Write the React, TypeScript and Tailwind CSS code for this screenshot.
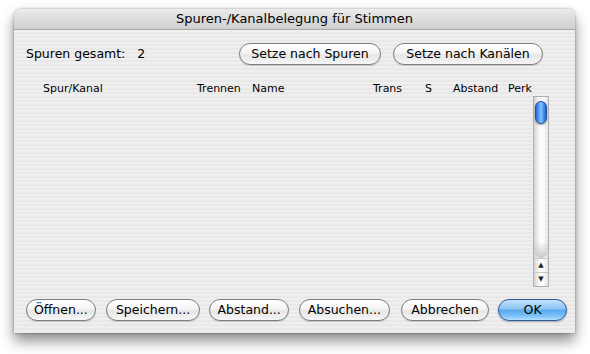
import React from "react";

const font = { fontFamily: '"DejaVu Sans", "Liberation Sans", sans-serif' };

function AquaButton({ label, className = "" }: { label: string; className?: string }) {
  return (
    <div
      className={
        "h-[22px] rounded-full border border-[#7d7d7d] flex items-center justify-center text-[12.5px] text-black bg-[linear-gradient(to_bottom,#ffffff_0%,#f4f4f4_45%,#e6e6e6_55%,#f6f6f6_100%)] shadow-[0_1px_1px_rgba(0,0,0,0.15)] " +
        className
      }
    >
      {label}
    </div>
  );
}

export default function App() {
  return (
    <div className="w-[590px] h-[354px] bg-white pt-[9px] pl-[14px]" style={font}>
      <div className="w-[561px] h-[324px] rounded-t-[7px] flex flex-col shadow-[0_8px_14px_rgba(0,0,0,0.45),0_0_3px_rgba(0,0,0,0.35)] overflow-hidden">
        {/* Title bar */}
        <div className="h-[21px] shrink-0 flex items-center justify-center text-[13px] text-black bg-[linear-gradient(to_bottom,#ececec_0%,#dcdcdc_50%,#cfcfcf_100%)] border-b border-[#a8a8a8]">
          Spuren-/Kanalbelegung für Stimmen
        </div>
        {/* Content */}
        <div className="flex-1 flex flex-col bg-[repeating-linear-gradient(to_bottom,#efefef_0px,#efefef_2px,#e8e8e8_2px,#e8e8e8_4px)]">
          <div className="flex items-center mt-[13px] pl-[12px] pr-[32px]">
            <span className="text-[12.5px]">Spuren gesamt:</span>
            <span className="text-[12.5px] ml-[12px]">2</span>
            <div className="flex-1" />
            <AquaButton label="Setze nach Spuren" className="w-[142px]" />
            <AquaButton label="Setze nach Kanälen" className="w-[150px] ml-[12px]" />
          </div>
          <div className="flex mt-[18px] pl-[29px] text-[11px] leading-[12px]">
            <span className="w-[154px]">Spur/Kanal</span>
            <span className="w-[55px]">Trennen</span>
            <span className="w-[121px]">Name</span>
            <span className="w-[52px]">Trans</span>
            <span className="w-[28px]">S</span>
            <span className="w-[55px]">Abstand</span>
            <span>Perk</span>
          </div>
          <div className="flex mt-[1px] h-[191px]">
            <div className="flex-1" />
            {/* Scrollbar */}
            <div className="w-[16px] mr-[26px] flex flex-col border border-[#b0b0b0] bg-[linear-gradient(to_right,#d2d2d2_0%,#f7f7f7_35%,#ffffff_60%,#e4e4e4_100%)]">
              <div className="mt-[4px] mx-auto w-[12px] h-[23px] rounded-full border border-[#1f4f9a] bg-[linear-gradient(to_right,#2d6ad1_0%,#5aa2f4_30%,#86c2ff_50%,#4a92ee_75%,#1d5ec8_100%)] shadow-[0_1px_2px_rgba(0,0,0,0.4)]" />
              <div className="flex-1 rounded-b-full bg-[linear-gradient(to_bottom,transparent_88%,#c8c8c8_100%)]" />
              <div className="h-[14px] flex items-center justify-center border-t border-[#c8c8c8] text-[7px] leading-none text-[#222]">▲</div>
              <div className="h-[14px] flex items-center justify-center border-t border-[#c8c8c8] text-[7px] leading-none text-[#222]">▼</div>
            </div>
          </div>
          <div className="flex items-center mt-[12px] pl-[12px] pr-[8px]">
            <AquaButton label="Öffnen..." className="w-[70px]" />
            <AquaButton label="Speichern..." className="w-[95px] ml-[10px]" />
            <AquaButton label="Abstand..." className="w-[80px] ml-[9px]" />
            <AquaButton label="Absuchen..." className="w-[91px] ml-[10px]" />
            <AquaButton label="Abbrechen" className="w-[89px] ml-[11px]" />
            <div className="h-[22px] w-[69px] ml-[9px] rounded-full border border-[#2d5c9c] flex items-center justify-center text-[12.5px] text-black bg-[linear-gradient(to_bottom,#c4e2fb_0%,#8cc4f5_45%,#5aa8ee_52%,#7cc2f8_80%,#b4e0ff_100%)] shadow-[0_1px_2px_rgba(0,0,0,0.3)]">
              OK
            </div>
          </div>
        </div>
      </div>
    </div>
  );
}
